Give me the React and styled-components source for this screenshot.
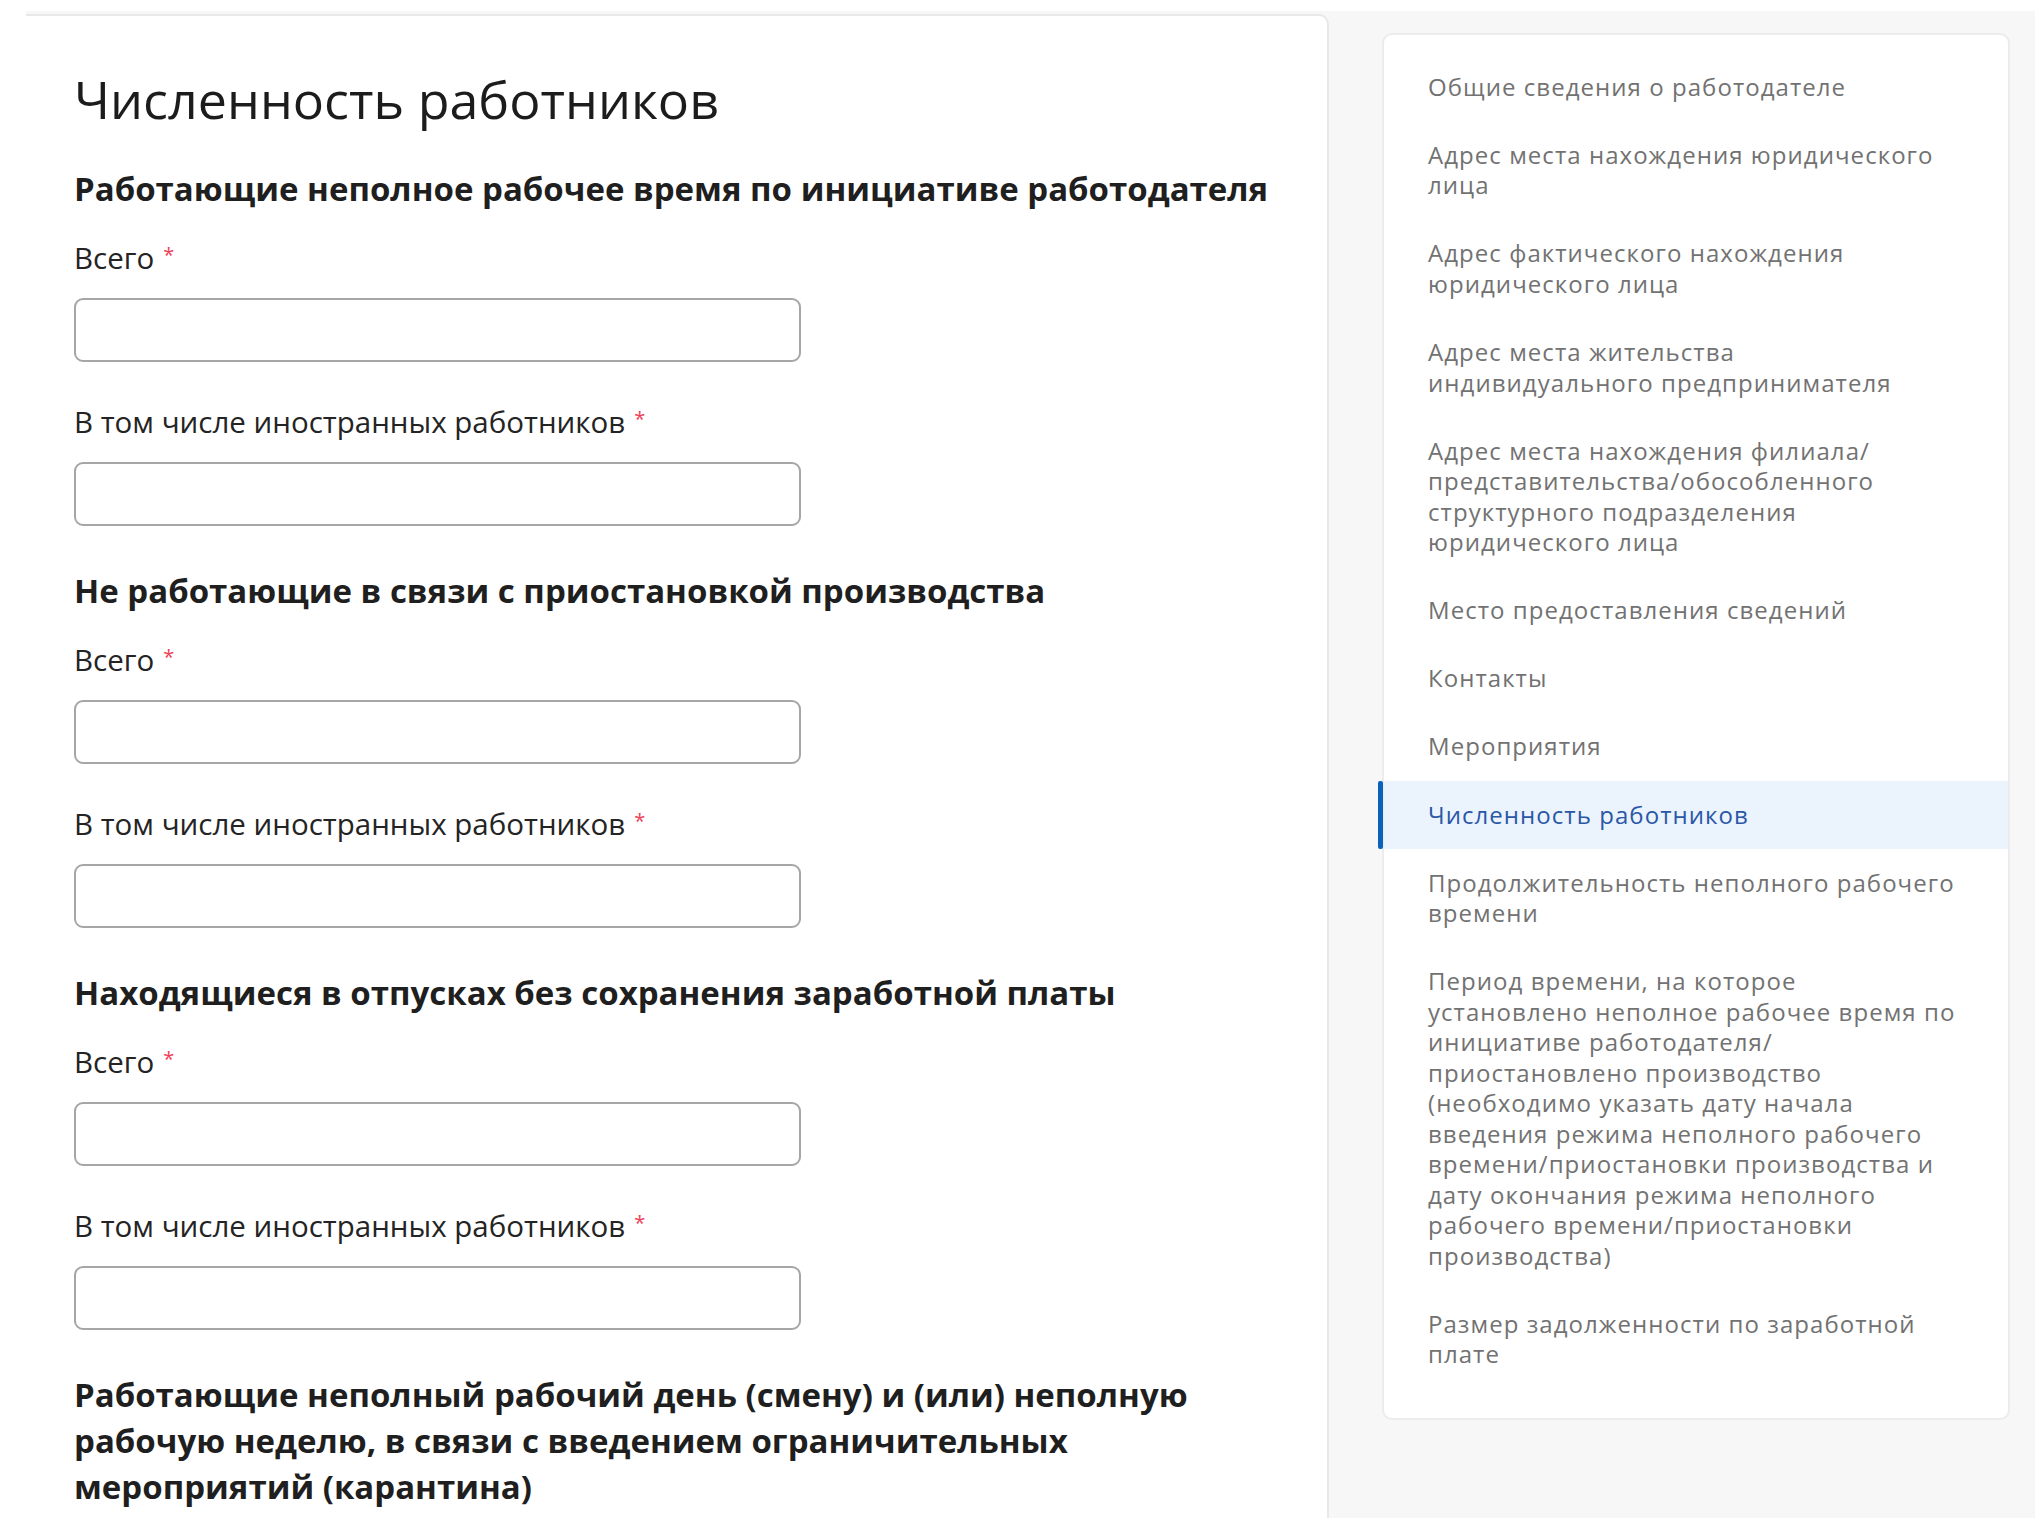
import React from 'react';
import styled, { createGlobalStyle } from 'styled-components';

const GlobalStyle = createGlobalStyle`
  html, body {
    margin: 0;
    padding: 0;
    background: #ffffff;
    overflow: hidden;
  }
  body {
    font-family: "Open Sans", "Liberation Sans", sans-serif;
    color: #1f1f1f;
  }
  * { box-sizing: border-box; }
`;

const Page = styled.div`
  padding: 11px 0 0 26px;
  height: 1518px;
`;

const Shell = styled.div`
  display: flex;
  align-items: flex-start;
  gap: 53px;
  height: 1507px;
  padding: 3px 25px 0 0;
  background: #f7f7f7;
  overflow: hidden;
`;

const MainCard = styled.section`
  flex: 0 0 1303px;
  min-height: 1700px;
  padding: 52px 48px 0 48px;
  background: #ffffff;
  border: 2px solid #e8e8e8;
  border-left: none;
  border-bottom: none;
  border-top-right-radius: 10px;
`;

const Title = styled.h1`
  margin: 0 0 36px;
  font-size: 52px;
  line-height: 62px;
  font-weight: 500;
  color: #1c1c1c;
`;

const Section = styled.div`
  display: flex;
  flex-direction: column;
  margin-bottom: 42px;
`;

const SectionTitle = styled.h2`
  margin: 0 0 29px;
  font-size: 33px;
  line-height: 46px;
  font-weight: 700;
  color: #1f1f1f;
`;

const Field = styled.div`
  display: flex;
  flex-direction: column;
  align-items: flex-start;

  & + & {
    margin-top: 43px;
  }
`;

const Label = styled.label`
  margin-bottom: 23px;
  font-size: 29.5px;
  line-height: 34px;
  color: #242424;
`;

const Req = styled.span`
  display: inline-block;
  position: relative;
  top: 4px;
  margin-left: 9px;
  font-size: 20px;
  line-height: 1;
  vertical-align: top;
  color: #ee3f58;
`;

const Input = styled.input`
  width: 727px;
  height: 64px;
  padding: 0 16px;
  border: 2px solid #a6a6a6;
  border-radius: 9px;
  background: #ffffff;
  font: inherit;
  font-size: 26px;
  outline: none;
`;

const Sidebar = styled.nav`
  flex: 0 0 628px;
  margin-top: 19px;
  padding: 18px 0 29px;
  background: #ffffff;
  border: 2px solid #ececec;
  border-radius: 10px;
`;

const NavItem = styled.a`
  position: relative;
  display: block;
  padding: 18.8px 20px 18.8px 44px;
  font-size: 24px;
  line-height: 30.5px;
  letter-spacing: 1.05px;
  color: ${p => (p.$active ? '#2b57a7' : '#727272')};
  background: ${p => (p.$active ? '#ebf4fd' : 'transparent')};
  text-decoration: none;
  cursor: pointer;

  &::before {
    content: '';
    display: ${p => (p.$active ? 'block' : 'none')};
    position: absolute;
    left: -6px;
    top: 0;
    bottom: 0;
    width: 5px;
    border-radius: 2px;
    background: #0b62bd;
  }
`;

const Line = styled.span`
  display: block;
  white-space: nowrap;
`;

const sections = [
  'Работающие неполное рабочее время по инициативе работодателя',
  'Не работающие в связи с приостановкой производства',
  'Находящиеся в отпусках без сохранения заработной платы',
];

const navItems = [
  ['Общие сведения о работодателе'],
  ['Адрес места нахождения юридического', 'лица'],
  ['Адрес фактического нахождения', 'юридического лица'],
  ['Адрес места жительства', 'индивидуального предпринимателя'],
  ['Адрес места нахождения филиала/', 'представительства/обособленного', 'структурного подразделения', 'юридического лица'],
  ['Место предоставления сведений'],
  ['Контакты'],
  ['Мероприятия'],
  ['Численность работников'],
  ['Продолжительность неполного рабочего', 'времени'],
  [
    'Период времени, на которое',
    'установлено неполное рабочее время по',
    'инициативе работодателя/',
    'приостановлено производство',
    '(необходимо указать дату начала',
    'введения режима неполного рабочего',
    'времени/приостановки производства и',
    'дату окончания режима неполного',
    'рабочего времени/приостановки',
    'производства)',
  ],
  ['Размер задолженности по заработной', 'плате'],
];

function NumberField({ label }) {
  return (
    <Field>
      <Label>
        {label}
        <Req>*</Req>
      </Label>
      <Input type="text" />
    </Field>
  );
}

export default function App() {
  return (
    <Page>
      <GlobalStyle />
      <Shell>
        <MainCard>
          <Title>Численность работников</Title>
          {sections.map(title => (
            <Section key={title}>
              <SectionTitle>{title}</SectionTitle>
              <NumberField label="Всего" />
              <NumberField label="В том числе иностранных работников" />
            </Section>
          ))}
          <Section>
            <SectionTitle>
              <Line>Работающие неполный рабочий день (смену) и (или) неполную</Line>
              <Line>рабочую неделю, в связи с введением ограничительных</Line>
              <Line>мероприятий (карантина)</Line>
            </SectionTitle>
          </Section>
        </MainCard>
        <Sidebar>
          {navItems.map((lines, i) => (
            <NavItem key={i} $active={i === 8}>
              {lines.map(l => (
                <Line key={l}>{l}</Line>
              ))}
            </NavItem>
          ))}
        </Sidebar>
      </Shell>
    </Page>
  );
}
